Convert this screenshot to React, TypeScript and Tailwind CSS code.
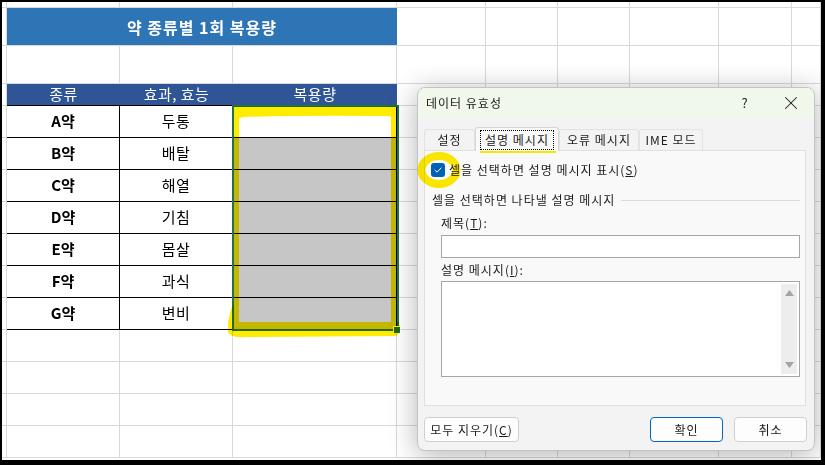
import { X } from 'lucide-react'

const GL = 'border-r border-b border-[#d9d9d9]'

const drugs = [
  ['A약', '두통'],
  ['B약', '배탈'],
  ['C약', '해열'],
  ['D약', '기침'],
  ['E약', '몸살'],
  ['F약', '과식'],
  ['G약', '변비'],
]

function RestCells() {
  return (
    <>
      <div className={`w-[89px] shrink-0 ${GL}`} />
      <div className={`w-[72px] shrink-0 ${GL}`} />
      <div className={`w-[72px] shrink-0 ${GL}`} />
      <div className={`w-[89px] shrink-0 ${GL}`} />
      <div className={`w-[73px] shrink-0 ${GL}`} />
      <div className={`flex-1 ${GL}`} />
    </>
  )
}

function BlankRow({ h }: { h: string }) {
  return (
    <div className={`flex ${h}`}>
      <div className={`w-[5px] shrink-0 ${GL}`} />
      <div className={`w-[113px] shrink-0 ${GL}`} />
      <div className={`w-[113px] shrink-0 ${GL}`} />
      <div className={`w-[164px] shrink-0 ${GL}`} />
      <RestCells />
    </div>
  )
}

function Sheet() {
  return (
    <div className="flex flex-col h-full overflow-hidden bg-white text-[15px] text-black">
      <BlankRow h="h-[6px]" />

      {/* title band */}
      <div className="flex h-[38px]">
        <div className={`w-[5px] shrink-0 ${GL}`} />
        <div className="w-[390px] shrink-0 bg-[#2e75b6] border-b border-[#d9d9d9] flex items-center justify-center text-white font-bold text-[16px] tracking-[1px]">
          약 종류별 1회 복용량
        </div>
        <RestCells />
      </div>

      <BlankRow h="h-[38px]" />

      {/* header */}
      <div className="flex h-[22px] tracking-[0.5px]">
        <div className={`w-[5px] shrink-0 ${GL}`} />
        <div className="w-[113px] shrink-0 bg-[#2f5597] border-b border-black flex items-center justify-center text-white">종류</div>
        <div className="w-[113px] shrink-0 bg-[#2f5597] border-b border-black flex items-center justify-center text-white">효과, 효능</div>
        <div className="w-[164px] shrink-0 bg-[#2f5597] border-b border-black flex items-center justify-center text-white">복용량</div>
        <RestCells />
      </div>

      {drugs.map(([name, effect], i) => (
        <div key={name} className="flex h-[32px]">
          <div className={`w-[5px] shrink-0 ${GL}`} />
          <div className="w-[113px] shrink-0 border-r border-b border-black flex items-center justify-center font-bold">{name}</div>
          <div className="w-[113px] shrink-0 border-r border-b border-black flex items-center justify-center tracking-[0.5px]">{effect}</div>
          <div className={`w-[164px] shrink-0 border-r border-b border-black ${i === 0 ? 'bg-white' : 'bg-[#c6c6c6]'}`} />
          <RestCells />
        </div>
      ))}

      <BlankRow h="h-[32px]" />
      <BlankRow h="h-[32px]" />
      <BlankRow h="h-[32px]" />
      <BlankRow h="h-[32px]" />
    </div>
  )
}

function Tab({ label, active, w }: { label: string; active?: boolean; w: string }) {
  if (active) {
    return (
      <div className={`${w} h-[24px] relative z-10 -mb-px bg-[#f9f9f9] border border-b-0 border-[#d6d6d6] rounded-t-[3px] flex items-start justify-center pt-[2px]`}>
        <span className="border border-dotted border-black px-[4px] leading-[18px]">{label}</span>
      </div>
    )
  }
  return (
    <div className={`${w} h-[21px] border border-b-0 border-[#e2e2e2] rounded-t-[3px] flex items-center justify-center`}>
      {label}
    </div>
  )
}

function Button({ children, w, primary }: { children: React.ReactNode; w: string; primary?: boolean }) {
  return (
    <div
      className={`${w} h-[25px] rounded-[4px] bg-[#fdfdfd] flex items-center justify-center border ${
        primary ? 'border-[#0067c0]' : 'border-[#d0d0d0]'
      }`}
    >
      {children}
    </div>
  )
}

function Dialog() {
  return (
    <div className="absolute left-[417px] top-[87px] w-[398px] h-[364px] rounded-lg border border-[#c4c4c4] bg-[#f3f3f3] overflow-hidden flex flex-col shadow-[0_4px_28px_rgba(0,0,0,0.3)] text-[12px] text-[#1b1b1b] leading-[16px] tracking-[1px]">
      {/* title bar */}
      <div className="h-[30px] shrink-0 bg-[#eff8ea] flex items-center">
        <div className="flex-1 pl-[8px]">데이터 유효성</div>
        <div className="w-[46px] text-center text-[13px]">?</div>
        <div className="w-[46px] flex justify-center">
          <X size={22} strokeWidth={1.1} color="#1b1b1b" />
        </div>
      </div>

      <div className="flex-1 flex flex-col pl-[6px] pr-[8px]">
        {/* tabs */}
        <div className="mt-[8px] h-[24px] flex items-end">
          <Tab label="설정" w="w-[51px]" />
          <Tab label="설명 메시지" w="w-[84px]" active />
          <Tab label="오류 메시지" w="w-[80px]" />
          <Tab label="IME 모드" w="w-[64px]" />
        </div>

        {/* panel */}
        <div className="h-[256px] border border-[#e0e0e0] bg-[#f9f9f9] flex flex-col">
          <div className="mt-[12px] h-[14px] flex items-center pl-[6px] gap-[4px]">
            <div className="w-[14px] h-[14px] rounded-[3px] bg-[#005fb8] flex items-center justify-center">
              <svg width="10" height="10" viewBox="0 0 10 10" fill="none">
                <path d="M2 5.2 L4.1 7.2 L8 3" stroke="white" strokeWidth="1" strokeLinecap="round" strokeLinejoin="round" />
              </svg>
            </div>
            <span>
              셀을 선택하면 설명 메시지 표시(<span className="underline">S</span>)
            </span>
          </div>

          <div className="mt-[15px] h-[16px] flex items-center pl-[7px] pr-[5px] gap-[6px]">
            <span className="whitespace-nowrap">셀을 선택하면 나타낼 설명 메시지</span>
            <div className="flex-1 h-px bg-[#dcdcdc]" />
          </div>

          <div className="mt-[7px] h-[16px] pl-[16px]">
            제목(<span className="underline">T</span>):
          </div>
          <div className="mt-[4px] ml-[16px] mr-[5px] h-[23px] bg-white border border-[#a6a6a6]" />

          <div className="mt-[4px] h-[16px] pl-[16px]">
            설명 메시지(<span className="underline">I</span>):
          </div>
          <div className="mt-[3px] ml-[16px] mr-[5px] h-[96px] bg-white border border-[#a6a6a6] flex justify-end p-[2px]">
            <div className="w-[16px] h-full bg-[#ededed] flex flex-col items-center justify-between py-[6px]">
              <svg width="9" height="6" viewBox="0 0 9 6">
                <path d="M0 6 L4.5 0 L9 6 Z" fill="#a3a3a3" />
              </svg>
              <svg width="9" height="6" viewBox="0 0 9 6">
                <path d="M0 0 L9 0 L4.5 6 Z" fill="#a3a3a3" />
              </svg>
            </div>
          </div>
        </div>

        {/* buttons */}
        <div className="mt-[11px] flex justify-between">
          <Button w="w-[95px]">
            모두 지우기(<span className="underline">C</span>)
          </Button>
          <div className="flex gap-[11px] -mr-px">
            <Button w="w-[73px]" primary>확인</Button>
            <Button w="w-[73px]">취소</Button>
          </div>
        </div>
      </div>
    </div>
  )
}

export default function App() {
  return (
    <div className="relative w-[825px] h-[465px] bg-black pt-[2px] pl-[2px] pr-[4px] pb-[5px] font-['Noto_Sans_CJK_KR',sans-serif]">
      <Sheet />

      {/* selection border + fill handle */}
      <div className="absolute left-[232px] top-[105px] w-[167px] h-[226px] border-2 border-[#217346]" />
      <div className="absolute left-[394px] top-[327px] w-[6px] h-[6px] bg-[#217346] outline outline-1 outline-white" />

      <Dialog />

      {/* highlighter marks */}
      <svg className="absolute left-0 top-0 mix-blend-multiply pointer-events-none" width="825" height="465">
        <g fill="#ffeb00">
          <path d="M234 106 L396 106 L396 117 L386 116 Q300 115 244 117 L239 118 L239 322 L234 322 Z" />
          <path d="M391 116 L396 116 L396 322 L391 322 Z" />
          <path d="M235 300 Q227 316 228 332 Q230 338 244 337 L396 336 Q401 333 399 322 L236 322 Z" />
          <path d="M480 142 L556 142 L556 153 L480 153 Z" />
        </g>
        <ellipse cx="439" cy="170" rx="17.5" ry="14" fill="none" stroke="#ffeb00" strokeWidth="8" />
      </svg>
    </div>
  )
}
